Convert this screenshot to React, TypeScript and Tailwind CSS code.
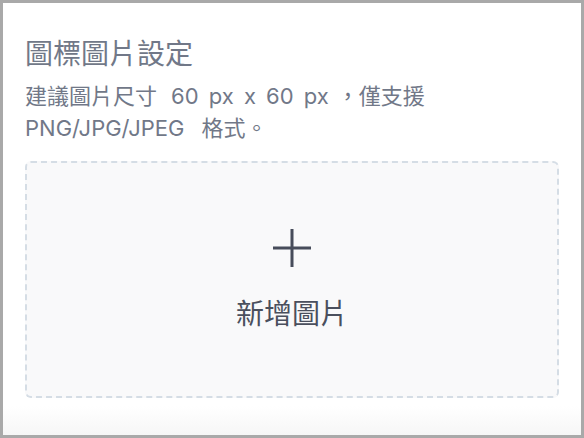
// Icon image settings card with an empty upload drop zone
function PlusIcon() {
  return (
    <svg width="38" height="38" viewBox="0 0 38 38" fill="none" stroke="#474c5a" strokeWidth="3">
      <path d="M19 0v38M0 19h38" />
    </svg>
  );
}

export default function App() {
  return (
    <div
      className="w-[584px] h-[438px] border-[3px] border-[#a9a9a9] bg-white flex flex-col overflow-hidden"
      style={{ fontFamily: 'Inter, "Noto Sans CJK TC", sans-serif' }}
    >
      <div className="px-[22px] pt-[33px]">
        <h2 className="text-[28px] leading-[36px] text-[#717888] font-normal">圖標圖片設定</h2>
        <p className="mt-[8px] text-[22px] leading-[32px] text-[#717888]">
          <span>建議圖片尺寸</span>
          <span className="ml-[14px] [word-spacing:4px]">60 px x 60 px</span>
          <span className="ml-[8px]">，僅支援</span>
          <br />
          <span>PNG/JPG/JPEG</span>
          <span className="ml-[17px]">格式。</span>
        </p>

        {/* Upload area */}
        <button
          type="button"
          className="mt-[17px] w-full h-[237px] rounded-[6px] border-2 border-dashed border-[#d5dde5] bg-[#f9f9fa] flex flex-col items-center pt-[66px]"
        >
          <PlusIcon />
          <span className="mt-[29px] text-[28px] leading-[36px] text-[#4a4f5d]">新增圖片</span>
        </button>
      </div>
      <div className="mt-[8px] flex-1 bg-gradient-to-b from-white to-[#f6f6f6]" />
    </div>
  );
}
